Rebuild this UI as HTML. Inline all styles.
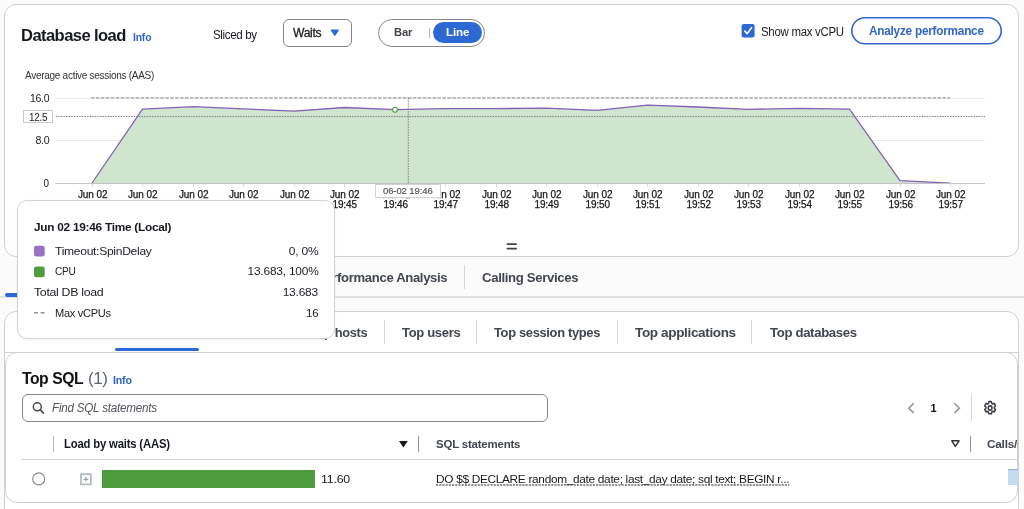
<!DOCTYPE html>
<html lang="en">
<head>
<meta charset="utf-8">
<title>Database load</title>
<style>
*{box-sizing:border-box;margin:0;padding:0}
html,body{width:1024px;height:509px;overflow:hidden;background:#fbfbfb;font-family:"Liberation Sans",sans-serif;color:#16191f}
.abs{position:absolute;white-space:nowrap;line-height:1;transform-origin:0 50%;transform:scaleX(var(--sx,1))}
.panel{position:absolute;background:#fff;border:1px solid #d0d0d4;border-radius:12px}
.b{font-weight:bold}
.blue{color:#3166c6}
.gray{color:#424650}
.vdiv{position:absolute;width:1px;background:#d6d6db}
.hline{position:absolute;height:1px;background:#c6c6cd}
.xl{position:absolute;width:60px;text-align:center;font-size:10px;line-height:10.5px;color:#18181c;margin-top:0.5px;margin-left:0.7px;-webkit-text-stroke:0.25px #18181c;white-space:nowrap;letter-spacing:-0.1px}
.tt{font-size:11.5px;color:#1a1d24}
</style>
</head>
<body>
<div id="root" style="position:absolute;left:0;top:0;width:1024px;height:509px;overflow:hidden;will-change:transform">
<!-- ===== Panel 1 : Database load ===== -->
<div class="panel" style="left:4px;top:4px;width:1015px;height:253px"></div>

<div id="h1" class="abs b" style="left:21px;top:27px;font-size:17px;letter-spacing:-0.6px;--sx:0.975">Database load</div>
<div id="info1" class="abs b blue" style="left:133px;top:32px;font-size:11px;letter-spacing:-0.2px;--sx:0.945">Info</div>
<div id="sliced" class="abs" style="left:213px;top:28.6px;font-size:12.5px;letter-spacing:-0.4px;--sx:0.929">Sliced by</div>

<!-- select -->
<div class="abs" style="left:283px;top:19px;width:69px;height:28px;border:1px solid #87878c;border-radius:6px;background:#fff"></div>
<div id="waits" class="abs" style="left:293px;top:26.6px;font-size:12px;letter-spacing:-0.3px;color:#222;-webkit-text-stroke:0.3px #222;--sx:1.008">Waits</div>
<svg class="abs" style="left:329px;top:28px" width="12" height="10" viewBox="0 0 12 10"><path d="M2.4 2.1 L9.2 2.1 L5.8 7.2 Z" fill="#2d69d2" stroke="#2d69d2" stroke-width="1.4" stroke-linejoin="round"/></svg>

<!-- segmented -->
<div class="abs" style="left:378px;top:19px;width:107px;height:28px;border:1px solid #87878c;border-radius:14px;background:#fff"></div>
<div id="bar" class="abs b gray" style="left:394px;top:26.7px;font-size:11.5px;letter-spacing:-0.1px;--sx:0.969">Bar</div>
<div class="vdiv" style="left:429px;top:28px;height:10px;background:#b5b8c0"></div>
<div class="abs" style="left:433px;top:22px;width:49px;height:21px;border-radius:10.5px;background:#2d69d2"></div>
<div id="line" class="abs b" style="left:445.5px;top:26.7px;font-size:11.5px;color:#fff;letter-spacing:-0.1px;--sx:1.002">Line</div>

<!-- checkbox -->
<svg class="abs" style="left:740px;top:22px" width="18" height="18" viewBox="740 22 18 18"><rect x="741.6" y="24.1" width="13" height="13.3" rx="2.2" fill="#2d69d2"/><path d="M744.8 31.1 L747.2 33.6 L751.6 27.6" fill="none" stroke="#fff" stroke-width="1.6" stroke-linecap="round" stroke-linejoin="round"/></svg>
<div id="showmax" class="abs" style="left:761px;top:25.5px;font-size:12.5px;letter-spacing:-0.3px;color:#1a1d24;--sx:0.914">Show max vCPU</div>

<!-- analyze button -->
<svg class="abs" style="left:848px;top:14px" width="158" height="34" viewBox="848 14 158 34"><rect x="851.85" y="17.75" width="149.4" height="26" rx="13" fill="#fff" stroke="#3368c8" stroke-width="1.6"/></svg>
<div id="analyze" class="abs b blue" style="left:869px;top:25px;font-size:12.5px;letter-spacing:-0.25px;--sx:0.943">Analyze performance</div>

<div id="aas" class="abs" style="left:25px;top:70px;font-size:10.5px;letter-spacing:-0.3px;color:#333;--sx:0.954">Average active sessions (AAS)</div>

<!-- chart -->
<svg class="abs" style="left:0;top:90px" width="1024" height="100" viewBox="0 90 1024 100">
  <g stroke="#eaeaed" stroke-width="1" shape-rendering="crispEdges">
    <line x1="55" y1="98.5" x2="985" y2="98.5"/>
    <line x1="55" y1="140.5" x2="985" y2="140.5"/>
  </g>
  <path d="M92 183 L142.5 109.2 L193 106.7 L243.5 108.8 L294 111.2 L344.5 107.5 L395 109.7 L445.5 108.6 L496 108.6 L546.5 108.2 L597 110.3 L647.5 105.2 L698 107 L748.5 109.3 L799 108.4 L849.5 109.2 L900 180.6 L950 183.2 Z" fill="#cfe5cd"/>
  <path d="M92 183 L142.5 109.2 L193 106.7 L243.5 108.8 L294 111.2 L344.5 107.5 L395 109.7 L445.5 108.6 L496 108.6 L546.5 108.2 L597 110.3 L647.5 105.2 L698 107 L748.5 109.3 L799 108.4 L849.5 109.2 L900 180.6 L950 183.2" fill="none" stroke="#8461b6" stroke-width="1.3" stroke-linejoin="round"/>
  <line x1="55" y1="183.5" x2="985" y2="183.5" stroke="#c2c2c7" stroke-width="1" shape-rendering="crispEdges"/>
  <g stroke="#dcdce0" stroke-width="1" shape-rendering="crispEdges">
    <line x1="92.5" y1="184" x2="92.5" y2="187"/><line x1="142.5" y1="184" x2="142.5" y2="187"/><line x1="193.5" y1="184" x2="193.5" y2="187"/><line x1="243.5" y1="184" x2="243.5" y2="187"/><line x1="294.5" y1="184" x2="294.5" y2="187"/><line x1="344.5" y1="184" x2="344.5" y2="187"/><line x1="445.5" y1="184" x2="445.5" y2="187"/><line x1="496.5" y1="184" x2="496.5" y2="187"/><line x1="546.5" y1="184" x2="546.5" y2="187"/><line x1="597.5" y1="184" x2="597.5" y2="187"/><line x1="647.5" y1="184" x2="647.5" y2="187"/><line x1="698.5" y1="184" x2="698.5" y2="187"/><line x1="748.5" y1="184" x2="748.5" y2="187"/><line x1="799.5" y1="184" x2="799.5" y2="187"/><line x1="849.5" y1="184" x2="849.5" y2="187"/><line x1="900.5" y1="184" x2="900.5" y2="187"/><line x1="950.5" y1="184" x2="950.5" y2="187"/>
  </g>
  <line x1="91" y1="97.9" x2="950" y2="97.9" stroke="#7a7a80" stroke-width="0.9" stroke-dasharray="3.5 1.45"/>
  <line x1="55.7" y1="116.6" x2="985" y2="116.6" stroke="#7c7c82" stroke-width="1" stroke-dasharray="1.5 1.1"/>
  <line x1="408.3" y1="98" x2="408.3" y2="184" stroke="#7c7c82" stroke-width="1" stroke-dasharray="1.5 1.1"/>
  <circle cx="395" cy="109.7" r="2.4" fill="#fff" stroke="#4f9c3e" stroke-width="1.1"/>
</svg>

<!-- y labels -->
<div id="y16" class="abs" style="right:975px;top:93px;font-size:11px;letter-spacing:-0.3px;color:#222;transform-origin:100% 50%;--sx:0.95">16.0</div>
<div class="abs" style="left:23px;top:110px;width:30px;height:13px;border:1px solid #c9c9ce;background:#fff"></div>
<div id="y125" class="abs" style="right:976.5px;top:112px;font-size:10.5px;letter-spacing:-0.3px;color:#222;transform-origin:100% 50%;--sx:0.95">12.5</div>
<div id="y8" class="abs" style="right:974.5px;top:135px;font-size:11px;letter-spacing:-0.3px;color:#222;transform-origin:100% 50%;--sx:0.97">8.0</div>
<div id="y0" class="abs" style="right:975px;top:178px;font-size:11px;letter-spacing:-0.3px;color:#222;transform-origin:100% 50%;--sx:0.9">0</div>

<!-- x labels -->
<div class="xl" style="left:62px;top:189px">Jun 02</div>
<div class="xl" style="left:112px;top:189px">Jun 02</div>
<div class="xl" style="left:163px;top:189px">Jun 02</div>
<div class="xl" style="left:213px;top:189px">Jun 02</div>
<div class="xl" style="left:264px;top:189px">Jun 02</div>
<div class="xl" id="xl45" style="left:314px;top:189px">Jun 02<br>19:45</div>
<div class="xl" style="left:365px;top:189px">Jun 02<br>19:46</div>
<div class="xl" style="left:415px;top:189px">Jun 02<br>19:47</div>
<div class="xl" style="left:466px;top:189px">Jun 02<br>19:48</div>
<div class="xl" style="left:516px;top:189px">Jun 02<br>19:49</div>
<div class="xl" style="left:567px;top:189px">Jun 02<br>19:50</div>
<div class="xl" style="left:617px;top:189px">Jun 02<br>19:51</div>
<div class="xl" style="left:668px;top:189px">Jun 02<br>19:52</div>
<div class="xl" style="left:718px;top:189px">Jun 02<br>19:53</div>
<div class="xl" style="left:769px;top:189px">Jun 02<br>19:54</div>
<div class="xl" style="left:819px;top:189px">Jun 02<br>19:55</div>
<div class="xl" style="left:870px;top:189px">Jun 02<br>19:56</div>
<div class="xl" style="left:920px;top:189px">Jun 02<br>19:57</div>

<!-- hover label -->
<div class="abs" style="left:375px;top:184px;width:66px;height:14px;border:1px solid #d2d2d6;background:#fff"></div>
<div id="hov" class="abs" style="left:383px;top:186px;font-size:9.5px;letter-spacing:-0.1px;color:#58585c;-webkit-text-stroke:0.2px #58585c">06-02 19:46</div>

<!-- drag handle -->
<svg class="abs" style="left:504px;top:240px" width="16" height="12" viewBox="504 240 16 12"><rect x="506.7" y="243.3" width="10.1" height="1.8" rx="0.6" fill="#414149"/><rect x="506.7" y="247.7" width="10.1" height="1.8" rx="0.6" fill="#414149"/></svg>

<!-- ===== tabs row 1 ===== -->
<div class="hline" style="left:0;top:296px;width:1024px;height:2px;background:#e0e0e4"></div>
<div class="abs" style="left:5px;top:293px;width:20px;height:4px;border-radius:2px;background:#2d69d2"></div>
<div id="tab1" class="abs b gray" style="left:317.3px;top:270.5px;font-size:13.5px;letter-spacing:-0.35px;--sx:0.970">Performance Analysis</div>
<div class="vdiv" style="left:464px;top:265px;height:24px"></div>
<div id="tab2" class="abs b gray" style="left:482px;top:270.5px;font-size:13.5px;letter-spacing:-0.35px;--sx:0.976">Calling Services</div>

<!-- ===== Panel 2 ===== -->
<div class="panel" style="left:4px;top:311px;width:1015px;height:220px"></div>
<div id="t_hosts" class="abs b gray" style="left:310.2px;top:325.5px;font-size:13.5px;letter-spacing:-0.35px;--sx:0.950">Top hosts</div>
<div class="vdiv" style="left:384px;top:320px;height:24px"></div>
<div id="t_users" class="abs b gray" style="left:402px;top:325.5px;font-size:13.5px;letter-spacing:-0.35px;--sx:0.966">Top users</div>
<div class="vdiv" style="left:476px;top:320px;height:24px"></div>
<div id="t_sess" class="abs b gray" style="left:494px;top:325.5px;font-size:13.5px;letter-spacing:-0.35px;--sx:0.957">Top session types</div>
<div class="vdiv" style="left:617px;top:320px;height:24px"></div>
<div id="t_apps" class="abs b gray" style="left:635px;top:325.5px;font-size:13.5px;letter-spacing:-0.35px;--sx:1.001">Top applications</div>
<div class="vdiv" style="left:751px;top:320px;height:24px"></div>
<div id="t_dbs" class="abs b gray" style="left:770px;top:325.5px;font-size:13.5px;letter-spacing:-0.35px;--sx:0.975">Top databases</div>
<div class="hline" style="left:5px;top:352px;width:1013px;background:#d0d0d4"></div>
<div class="abs" style="left:115px;top:348px;width:84px;height:3px;border-radius:1.5px;background:#2d69d2"></div>

<!-- ===== Panel 3 : Top SQL ===== -->
<div class="panel" style="left:5px;top:352px;width:1013px;height:151px"></div>
<div id="topsql" class="abs b" style="left:22px;top:369.6px;font-size:16.5px;letter-spacing:-0.5px;color:#111;--sx:0.954">Top SQL</div>
<div id="topsql_n" class="abs" style="left:88px;top:369.6px;font-size:16.5px;letter-spacing:-0.5px;color:#5f6672;--sx:1.034">(1)</div>
<div id="info2" class="abs b blue" style="left:113px;top:375px;font-size:11px;letter-spacing:-0.2px;--sx:0.971">Info</div>

<!-- search -->
<div class="abs" style="left:22px;top:394px;width:526px;height:28px;border:1px solid #87878c;border-radius:6px;background:#fff"></div>
<svg class="abs" style="left:32px;top:401px" width="14" height="14" viewBox="0 0 14 14"><circle cx="5.3" cy="5.8" r="4" fill="none" stroke="#4a4a50" stroke-width="1.5"/><path d="M8.4 8.9 L11.4 12.2" stroke="#4a4a50" stroke-width="1.7" stroke-linecap="round"/></svg>
<div id="ph" class="abs" style="left:52px;top:402px;font-size:12px;font-style:italic;letter-spacing:-0.25px;color:#50545e;--sx:0.973">Find SQL statements</div>

<!-- pagination -->
<svg class="abs" style="left:905px;top:400px" width="14" height="16" viewBox="0 0 14 16"><path d="M8.7 3.4 L3.7 8.15 L8.7 12.9" fill="none" stroke="#96969c" stroke-width="1.5"/></svg>
<div id="pg1" class="abs b" style="left:930.5px;top:403px;font-size:11px;color:#111">1</div>
<svg class="abs" style="left:950px;top:400px" width="14" height="16" viewBox="0 0 14 16"><path d="M4.4 3.4 L9.4 8.15 L4.4 12.9" fill="none" stroke="#96969c" stroke-width="1.5"/></svg>
<div class="vdiv" style="left:971px;top:394px;height:27px"></div>
<svg class="abs" style="left:982.9px;top:399.8px" width="14.25" height="16.2" viewBox="0 0 16 16" preserveAspectRatio="none"><g fill="none" stroke="#3c3f48" stroke-width="1.7" stroke-linejoin="round"><path d="M6.6 1.6h2.8l.45 1.75 1.1.6 1.7-.55 1.4 2.4-1.3 1.2v1.2l1.3 1.2-1.4 2.4-1.7-.55-1.1.6-.45 1.75H6.6l-.45-1.75-1.1-.6-1.7.55-1.4-2.4 1.3-1.2V7l-1.3-1.2 1.4-2.4 1.7.55 1.1-.6z"/><circle cx="8" cy="8" r="2.1"/></g></svg>

<!-- table header -->
<div class="vdiv" style="left:53px;top:436px;height:16px;background:#b4b7bf"></div>
<div id="th1" class="abs b" style="left:64px;top:438px;font-size:12px;letter-spacing:-0.2px;color:#16191f;--sx:0.943">Load by waits (AAS)</div>
<svg class="abs" style="left:398px;top:440px" width="11" height="9" viewBox="0 0 11 9"><path d="M1 1 L9.8 1 L5.4 7.4 Z" fill="#16191f"/></svg>
<div class="vdiv" style="left:418px;top:436px;height:16px;background:#8d9099"></div>
<div id="th2" class="abs b gray" style="left:436px;top:438.5px;font-size:11.5px;letter-spacing:-0.2px;--sx:0.997">SQL statements</div>
<svg class="abs" style="left:950px;top:439px" width="11" height="10" viewBox="0 0 11 10"><path d="M1.8 1.8 L9 1.8 L5.4 7.4 Z" fill="none" stroke="#333" stroke-width="1.5" stroke-linejoin="round"/></svg>
<div class="vdiv" style="left:970px;top:436px;height:16px;background:#8d9099"></div>
<div class="abs" style="left:987px;top:438px;width:30.6px;height:14px;overflow:hidden;font-size:12px"><div id="th3" class="abs b gray" style="left:0;top:0.5px;font-size:11.5px;letter-spacing:-0.2px;--sx:1.02">Calls/sec</div></div>
<div class="hline" style="left:22px;top:459px;width:995px;background:#cfcfd4"></div>

<!-- row -->
<svg class="abs" style="left:30px;top:470px" width="66" height="18" viewBox="30 470 66 18"><circle cx="38.7" cy="478.9" r="6" fill="#fff" stroke="#85858a" stroke-width="1.1"/><rect x="81" y="474.1" width="9.8" height="10.3" fill="#fbfdfd" stroke="#b3bbbc" stroke-width="1.7"/><path d="M83.6 479.3 H88.2 M85.9 477 V481.6" stroke="#98a3a4" stroke-width="1.2" fill="none"/></svg>
<div class="abs" style="left:102px;top:470px;width:213px;height:18px;background:#4f9c3e"></div>
<div id="v1160" class="abs" style="left:321px;top:473.5px;font-size:11.5px;letter-spacing:-0.2px;color:#16191f;--sx:1.078">11.60</div>
<div id="sqltxt" class="abs" style="left:436px;top:473.5px;font-size:11.5px;letter-spacing:-0.3px;color:#16191f;--sx:1.030">DO $$ DECLARE random_date date; last_day date; sql text; BEGIN r...</div>
<svg class="abs" style="left:436px;top:483px" width="354" height="4" viewBox="0 0 354 4"><line x1="0" y1="2" x2="353.5" y2="2" stroke="#2a2a2e" stroke-width="1.2" stroke-dasharray="2.2 1"/></svg>
<div class="abs" style="left:1007.5px;top:469px;width:10px;height:15.5px;background:#c6dbee;border-top:1px solid #8fb0d6"></div>

<!-- ===== Tooltip ===== -->
<div class="abs" style="left:17px;top:200px;width:318px;height:139px;border:1px solid #d3d4da;border-radius:10px;background:#fff;box-shadow:0 1px 3px rgba(0,0,0,0.06)"></div>
<div id="tt_title" class="abs b" style="left:34px;top:222px;font-size:11.5px;letter-spacing:-0.25px;color:#16191f;--sx:1.028">Jun 02 19:46 Time (Local)</div>
<svg class="abs" style="left:32px;top:243px" width="16" height="74" viewBox="32 243 16 74"><rect x="34" y="245.7" width="10.7" height="10.8" rx="2.3" fill="#9a70c5"/><rect x="34" y="266.4" width="10.7" height="10.8" rx="2.3" fill="#4f9c3e"/><rect x="34.2" y="312" width="3.8" height="1.5" fill="#8e8e93"/><rect x="40.7" y="312" width="3.8" height="1.5" fill="#8e8e93"/></svg>
<div id="tt_r1" class="abs tt" style="left:55px;top:245.5px;letter-spacing:-0.3px;--sx:1.054">Timeout:SpinDelay</div>
<div id="tt_v1" class="abs tt" style="right:705.6px;top:245.5px;letter-spacing:-0.2px;transform-origin:100% 50%;--sx:1.040">0, 0%</div>
<div id="tt_r2" class="abs tt" style="left:55px;top:266px;letter-spacing:-0.3px;--sx:0.879">CPU</div>
<div id="tt_v2" class="abs tt" style="right:705.6px;top:266px;letter-spacing:-0.2px;transform-origin:100% 50%;--sx:1.036">13.683, 100%</div>
<div id="tt_r3" class="abs tt" style="left:34px;top:286.5px;letter-spacing:-0.3px;--sx:1.074">Total DB load</div>
<div id="tt_v3" class="abs tt" style="right:705.6px;top:286.5px;letter-spacing:-0.2px;transform-origin:100% 50%;--sx:1.039">13.683</div>
<div id="tt_r4" class="abs tt" style="left:55px;top:307.5px;letter-spacing:-0.3px;--sx:0.962">Max vCPUs</div>
<div id="tt_v4" class="abs tt" style="right:705.6px;top:307.5px;letter-spacing:-0.2px;transform-origin:100% 50%;--sx:1.0">16</div>

</div>
</body>
</html>
